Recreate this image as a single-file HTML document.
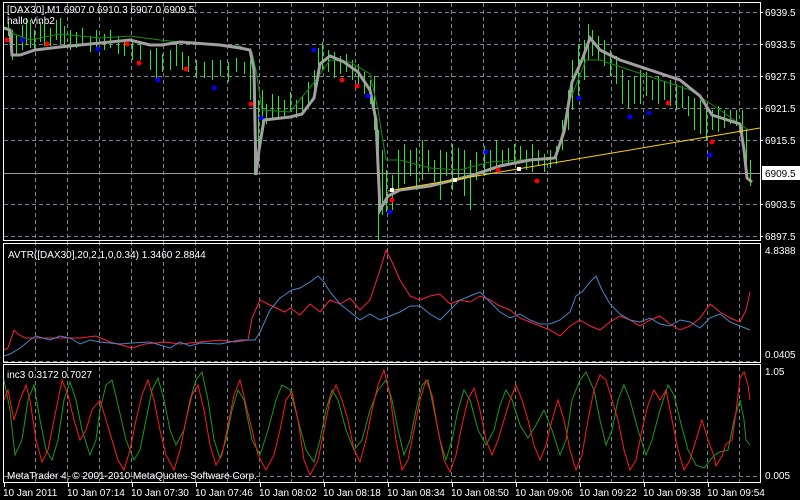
<!DOCTYPE html>
<html><head><meta charset="utf-8"><style>
html,body{margin:0;padding:0;background:#000;width:800px;height:500px;overflow:hidden}
svg{display:block}
text{font-family:"Liberation Sans",sans-serif;font-size:10px;fill:#fff}
</style></head><body>
<svg width="800" height="500" viewBox="0 0 800 500">
<rect width="800" height="500" fill="#000"/>
<g stroke="#7a8190" stroke-width="1" stroke-dasharray="4,3">
<path d="M35.5 3V482M67.5 3V482M99.5 3V482M131.5 3V482M163.5 3V482M195.5 3V482M227.5 3V482M259.5 3V482M291.5 3V482M323.5 3V482M355.5 3V482M387.5 3V482M419.5 3V482M451.5 3V482M483.5 3V482M515.5 3V482M547.5 3V482M579.5 3V482M611.5 3V482M643.5 3V482M675.5 3V482M707.5 3V482M739.5 3V482"/>
<path d="M4 12.5H760M4 44.5H760M4 76.5H760M4 108.5H760M4 140.5H760M4 204.5H760M4 236.5H760M4 361.5H760M4 476.5H760"/>
</g>
<g fill="none" stroke="#fff" stroke-width="1">
<rect x="3.5" y="2.5" width="757" height="238"/>
<rect x="3.5" y="243.5" width="757" height="119"/>
<rect x="3.5" y="364.5" width="757" height="118"/>
</g>
<path d="M4 173.5H760" stroke="#9a9a9a"/>
<g transform="translate(0.5,0)" shape-rendering="crispEdges">
<path stroke="#22ee22" stroke-width="1" fill="none" d="M8 22V36M12 30V60M16 35V55M22 25V50M26 18V45M30 20V48M34 30V50M40 22V42M44 24V46M50 28V46M56 20V40M60 18V44M64 26V46M70 30V50M76 32V48M82 28V46M90 36V52M96 30V48M104 34V50M110 30V48M118 36V54M124 40V56M132 42V60M140 44V60M150 50V70M156 48V80M162 54V72M170 50V70M176 44V66M182 52V70M188 56V72M196 60V78M204 62V78M212 60V80M220 60V76M228 62V82M236 58V72M244 62V74M250 60V100M254 70V175M258 100V150M262 90V125M266 104V124M272 94V120M278 96V118M284 100V116M290 92V112M296 100V118M302 96V112M308 82V104M314 70V92M318 48V74M322 42V70M328 50V72M334 52V78M340 56V74M346 54V72M352 60V80M358 64V86M364 72V94M370 80V104M374 76V130M378 130V240M382 150V215M386 170V212M392 175V210M398 150V190M404 144V184M410 150V176M416 148V190M422 140V180M428 150V172M434 160V182M440 150V200M446 152V176M452 144V190M458 148V178M464 150V196M470 160V210M476 152V180M484 146V176M490 150V172M496 140V170M502 150V166M508 148V164M514 144V164M520 146V162M526 150V170M532 144V172M538 150V166M544 154V172M550 150V168M556 146V164M562 120V150M568 90V130M572 60V110M578 44V100M584 40V80M588 24V60M592 30V56M598 36V60M604 40V66M610 50V76M616 56V84M622 70V104M628 80V108M634 76V104M640 70V104M646 72V96M652 80V100M658 76V104M664 82V100M670 80V106M676 84V110M682 86V108M688 96V116M694 98V130M700 100V134M706 104V140M712 110V130M718 106V132M724 110V128M730 110V124M736 110V126M742 110V140M746 130V170M750 160V186"/>
</g>
<polyline fill="none" stroke="#1a8a1a" stroke-width="1" points="4,28 14,34 30,40 60,34 100,38 130,36 160,40 200,44 240,46 252,52 256,70 262,110 290,112 316,80 330,60 350,62 370,74 378,110 386,160 400,160 430,168 460,170 490,162 520,160 556,158 570,100 586,60 600,60 630,70 660,80 690,90 720,110 748,130"/>
<polyline fill="none" stroke="#a0a0a0" stroke-width="3" points="4,28 10,30 12,55 20,55 35,50 60,47 100,43 130,40 150,45 162,45 180,42 220,45 240,48 250,50 254,70 256,175 259,150 264,120 290,117 302,114 314,98 320,64 330,56 344,62 358,72 370,90 376,120 380,210 388,196 400,190 430,186 470,176 500,166 530,160 555,158 564,132 572,82 582,60 590,38 600,50 620,60 650,70 680,80 700,96 712,115 740,124 744,150 747,178 752,182"/>
<line x1="388" y1="191" x2="760" y2="128" stroke="#ffd400" stroke-width="1"/>
<g fill="#fff"><rect x="390" y="188" width="4" height="4"/><rect x="453" y="178" width="4" height="4"/><rect x="517" y="167" width="4" height="4"/></g>
<g fill="#ff0000">
<circle cx="7" cy="40" r="2.5"/><circle cx="47" cy="44" r="2.5"/><circle cx="127" cy="44" r="2.5"/><circle cx="139" cy="63" r="2.5"/><circle cx="186" cy="69" r="2.5"/><circle cx="251" cy="104" r="2.5"/><circle cx="342" cy="80" r="2.5"/><circle cx="357" cy="86" r="2.5"/><circle cx="392" cy="200" r="2.5"/><circle cx="498" cy="170" r="2.5"/><circle cx="537" cy="181" r="2.5"/><circle cx="668" cy="103" r="2.5"/><circle cx="712" cy="142" r="2.5"/>
</g>
<g fill="#0000ff">
<circle cx="22" cy="40" r="2.5"/><circle cx="98" cy="49" r="2.5"/><circle cx="158" cy="80" r="2.5"/><circle cx="214" cy="88" r="2.5"/><circle cx="261" cy="118" r="2.5"/><circle cx="314" cy="50" r="2.5"/><circle cx="368" cy="96" r="2.5"/><circle cx="390" cy="212" r="2.5"/><circle cx="486" cy="152" r="2.5"/><circle cx="579" cy="98" r="2.5"/><circle cx="630" cy="117" r="2.5"/><circle cx="649" cy="113" r="2.5"/><circle cx="710" cy="155" r="2.5"/>
</g>
<polyline fill="none" stroke="#ff2040" stroke-width="1" points="4,350 8,348 14,330 18,334 25,338 40,338 60,338 80,338 96,336 110,342 125,346 132,348 145,344 165,342 180,344 200,342 220,340 235,342 248,340 252,318 260,300 270,305 285,312 290,308 300,315 310,304 320,312 330,300 340,304 350,298 360,310 370,300 380,270 386,250 392,262 400,280 410,296 420,300 430,296 440,294 450,304 460,300 470,302 480,296 490,300 500,306 510,310 520,318 530,322 540,326 550,330 560,336 570,326 580,320 590,326 600,330 610,322 620,316 630,320 640,326 650,320 660,316 670,324 680,330 690,326 700,318 710,304 720,312 730,318 740,322 746,310 750,292"/>
<polyline fill="none" stroke="#4a88c8" stroke-width="1" points="4,356 10,354 20,348 30,340 36,336 50,340 60,336 70,338 80,344 90,340 100,342 120,344 132,343 150,342 160,345 170,348 180,342 190,346 200,343 220,344 240,340 255,340 260,332 270,310 280,298 292,290 300,288 310,282 318,276 324,282 330,292 340,304 350,312 360,320 370,314 380,320 390,316 400,312 410,306 420,306 430,314 440,320 450,310 460,300 470,296 480,292 490,302 500,312 510,318 520,314 530,320 540,324 550,324 560,320 570,312 576,296 582,292 590,282 596,276 602,290 610,304 620,314 630,320 640,322 650,318 660,324 670,326 680,320 690,322 700,328 710,318 720,314 730,322 740,326 750,330"/>
<polyline fill="none" stroke="#1a9a1a" stroke-width="1" points="4,380 10,410 15,455 22,440 28,400 34,385 40,420 46,450 52,460 58,440 64,400 70,382 76,400 82,430 90,455 96,440 100,410 106,385 112,380 118,405 126,440 134,460 140,450 146,420 152,390 158,378 164,400 170,430 176,445 184,430 190,400 196,380 202,372 208,400 214,440 220,458 226,440 232,410 238,390 244,400 252,440 260,455 268,430 276,400 282,385 290,390 298,420 306,450 314,462 320,440 326,410 332,390 338,400 346,430 354,450 362,440 370,410 378,390 386,380 392,400 398,430 404,455 410,440 416,410 422,385 428,380 434,410 440,440 446,460 452,440 458,410 464,390 470,400 478,430 486,445 494,430 500,405 506,390 512,400 520,425 528,438 536,425 544,410 552,430 560,455 566,440 572,400 580,380 586,372 594,390 600,420 606,445 612,430 618,400 624,385 630,400 638,430 646,455 652,440 660,410 668,385 674,395 680,420 688,450 696,465 704,468 712,458 716,454 720,452 728,450 734,420 740,400 744,420 746,440 750,445"/>
<polyline fill="none" stroke="#ff1a1a" stroke-width="1" points="4,400 8,390 14,420 20,400 26,385 30,400 36,440 42,462 48,450 54,420 58,400 62,380 68,395 74,420 80,440 86,430 92,410 100,400 106,420 112,440 118,460 124,470 130,450 136,420 142,395 148,380 154,400 160,430 166,455 174,470 180,450 186,420 192,395 198,385 204,410 210,445 216,465 222,455 228,425 234,395 240,380 246,405 252,430 258,455 266,470 274,455 280,430 286,400 292,392 298,420 304,460 310,475 318,460 324,430 330,400 336,385 342,400 348,420 354,450 360,462 366,440 372,410 378,385 384,370 390,395 396,440 402,470 408,460 414,430 420,400 426,380 432,395 438,430 444,460 450,472 456,455 462,425 468,400 474,388 480,410 486,440 492,455 498,440 504,420 510,400 516,385 522,400 528,420 534,445 540,460 546,445 552,420 558,400 564,420 570,450 576,470 582,455 588,420 594,390 600,375 606,380 612,400 618,420 624,450 630,470 636,460 642,430 648,405 654,390 660,400 666,390 672,420 678,450 684,470 690,460 696,440 702,420 708,440 714,456 716,466 722,456 726,444 732,440 736,412 740,378 744,372 748,385 750,400"/>
<g>
<text x="765" y="16">6939.5</text><text x="765" y="48">6933.5</text><text x="765" y="80">6927.5</text><text x="765" y="112">6921.5</text><text x="765" y="144">6915.5</text><text x="765" y="208">6903.5</text><text x="765" y="240">6897.5</text>
<text x="765" y="254">4.8388</text><text x="765" y="358">0.0405</text>
<text x="765" y="375">1.05</text><text x="765" y="479">0.005</text>
</g>
<rect x="762" y="166" width="38" height="14" fill="#fff"/>
<text x="765" y="177" style="fill:#000">6909.5</text>
<g stroke="#fff"><path d="M760 12.5h3M760 44.5h3M760 76.5h3M760 108.5h3M760 140.5h3M760 204.5h3M760 236.5h3"/>
<path d="M4.5 483v4M68.5 483v4M132.5 483v4M196.5 483v4M260.5 483v4M324.5 483v4M388.5 483v4M452.5 483v4M516.5 483v4M580.5 483v4M644.5 483v4M708.5 483v4"/></g>
<g>
<text x="3" y="496">10 Jan 2011</text><text x="67" y="496">10 Jan 07:14</text><text x="131" y="496">10 Jan 07:30</text><text x="195" y="496">10 Jan 07:46</text><text x="259" y="496">10 Jan 08:02</text><text x="323" y="496">10 Jan 08:18</text><text x="387" y="496">10 Jan 08:34</text><text x="451" y="496">10 Jan 08:50</text><text x="515" y="496">10 Jan 09:06</text><text x="579" y="496">10 Jan 09:22</text><text x="643" y="496">10 Jan 09:38</text><text x="707" y="496">10 Jan 09:54</text>
</g>
<text x="7" y="13">[DAX30],M1  6907.0 6910.3 6907.0 6909.5</text>
<text x="7" y="24">hallo vinb2</text>
<text x="8" y="258">AVTR([DAX30],20,2,1,0,0.34) 1.3460 2.8844</text>
<text x="7" y="378">inc3 0.3172 0.7027</text>
<text x="7" y="479">MetaTrader 4, © 2001-2010 MetaQuotes Software Corp.</text>
</svg>
</body></html>
